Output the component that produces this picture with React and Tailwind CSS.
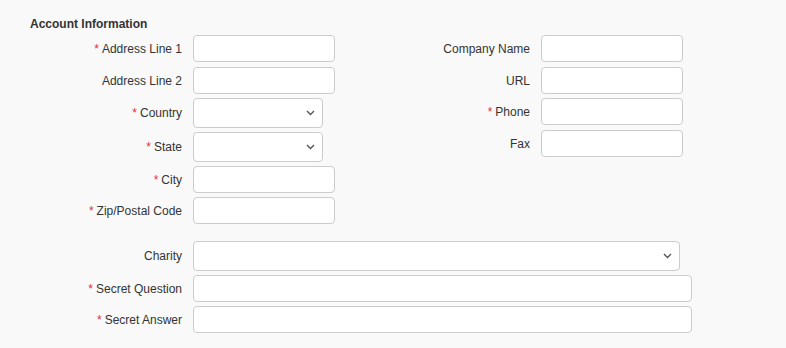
import React from 'react';

const Label = ({ text, required }) => (
  <label className="text-right text-[12px] leading-[14px] text-[#333]">
    {required && <span className="text-[#d9303f] mr-[3px]">*</span>}
    {text}
  </label>
);

const TextInput = ({ className = 'w-[142px]' }) => (
  <input
    type="text"
    className={`${className} h-[27px] bg-white border border-[#ccc] rounded-[4px] px-2 text-[12px] outline-none`}
  />
);

const Chevron = () => (
  <svg
    className="absolute right-[8px] top-1/2 -translate-y-1/2 pointer-events-none"
    width="9"
    height="6"
    viewBox="0 0 9 6"
    fill="none"
  >
    <path d="M1 1l3.5 3.5L8 1" stroke="#555" strokeWidth="1.4" />
  </svg>
);

const SelectInput = ({ className = 'w-[130px]' }) => (
  <div className={`relative ${className} h-[30px]`}>
    <select className="w-full h-full appearance-none bg-white border border-[#ccc] rounded-[4px] px-2 text-[12px] outline-none">
      <option></option>
    </select>
    <Chevron />
  </div>
);

const Row = ({ label, required, children, labelWidth = 'w-[152px]' }) => (
  <div className="flex items-center">
    <div className={`${labelWidth} flex justify-end shrink-0`}>
      <Label text={label} required={required} />
    </div>
    <div className="ml-[11px]">{children}</div>
  </div>
);

export default function App() {
  return (
    <div
      className="min-h-[348px] bg-[#f9f9f9] pt-[17px] pl-[30px]"
      style={{ fontFamily: '"Liberation Sans", Arial, sans-serif' }}
    >
      <h3 className="text-[12px] leading-[14px] font-bold text-[#333]">Account Information</h3>

      <div className="flex mt-[4px]">
        {/* left column */}
        <div className="flex flex-col gap-[4px]">
          <Row label="Address Line 1" required>
            <TextInput />
          </Row>
          <div className="mt-[1px]">
            <Row label="Address Line 2">
              <TextInput />
            </Row>
          </div>
          <Row label="Country" required>
            <SelectInput />
          </Row>
          <Row label="State" required>
            <SelectInput />
          </Row>
          <Row label="City" required>
            <TextInput />
          </Row>
          <Row label="Zip/Postal Code" required>
            <TextInput />
          </Row>
        </div>

        {/* right column */}
        <div className="flex flex-col gap-[4px] ml-[65px]">
          <Row label="Company Name" labelWidth="w-[130px]">
            <TextInput />
          </Row>
          <div className="mt-[1px]">
            <Row label="URL" labelWidth="w-[130px]">
              <TextInput />
            </Row>
          </div>
          <Row label="Phone" required labelWidth="w-[130px]">
            <TextInput />
          </Row>
          <div className="mt-[1px]">
            <Row label="Fax" labelWidth="w-[130px]">
              <TextInput />
            </Row>
          </div>
        </div>
      </div>

      <div className="flex flex-col gap-[4px] mt-[17px]">
        <Row label="Charity">
          <SelectInput className="w-[487px]" />
        </Row>
        <Row label="Secret Question" required>
          <TextInput className="w-[499px]" />
        </Row>
        <Row label="Secret Answer" required>
          <TextInput className="w-[499px]" />
        </Row>
      </div>
    </div>
  );
}
